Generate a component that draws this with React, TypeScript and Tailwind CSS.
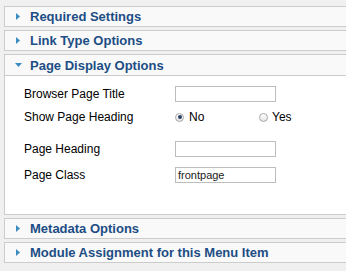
import React from 'react';

const Arrow = ({ open }: { open?: boolean }) => (
  <span className="w-[7px] h-[7px] flex items-center justify-center shrink-0">
    {open ? (
      <svg width="7" height="4" viewBox="0 0 7 4">
        <polygon points="0,0 7,0 3.5,4" fill="#3b8cc1" />
      </svg>
    ) : (
      <svg width="7" height="7" viewBox="0 0 7 7">
        <polygon points="1,0 5,3.5 1,7" fill="#3b8cc1" />
      </svg>
    )}
  </span>
);

const Header = ({ title, open, bordered = true }: { title: string; open?: boolean; bordered?: boolean }) => (
  <div
    className={`h-[21px] bg-[#f9f9f9] flex items-center pl-[10px] ${
      bordered ? 'border border-[#cccccc]' : 'border-b border-[#cccccc]'
    }`}
  >
    <Arrow open={open} />
    <span className="ml-[8px] text-[13px] font-bold text-[#1c4d84] leading-none">{title}</span>
  </div>
);

const TextInput = ({ value = '' }: { value?: string }) => (
  <div className="w-[101px] h-[16px] border border-[#bdbdbd] bg-white flex items-center pl-[2px] text-[11px] text-[#222] leading-none">
    {value}
  </div>
);

const Radio = ({ checked }: { checked?: boolean }) => (
  <span className="w-[9px] h-[9px] rounded-full border border-[#a8a8a8] bg-gradient-to-b from-[#ffffff] to-[#e4e4e4] flex items-center justify-center shrink-0">
    {checked && <span className="w-[4px] h-[4px] rounded-full bg-[#2a3f6a]" />}
  </span>
);

const Row = ({ label, children, className = '' }: { label: string; children: React.ReactNode; className?: string }) => (
  <div className={`flex items-center h-[16px] ${className}`}>
    <div className="w-[151px] shrink-0 text-[12px] text-black leading-none">{label}</div>
    {children}
  </div>
);

export default function App() {
  return (
    <div
      className="w-[346px] h-[271px] overflow-hidden bg-[#f0f0f0] pt-[6px] pl-[4px]"
      style={{ fontFamily: '"Liberation Sans", Arial, sans-serif' }}
    >
      <div className="w-[420px] flex flex-col gap-[3px]">
        <Header title="Required Settings" />
        <Header title="Link Type Options" />
        <div className="border border-[#cccccc] bg-white">
          <Header title="Page Display Options" open bordered={false} />
          <div className="h-[138px] pl-[19px] pt-[10px]">
            <Row label="Browser Page Title">
              <TextInput />
            </Row>
            <Row label="Show Page Heading" className="mt-[7px]">
              <div className="w-[84px] flex items-center">
                <Radio checked />
                <span className="ml-[5px] text-[12px] leading-none">No</span>
              </div>
              <div className="flex items-center">
                <Radio />
                <span className="ml-[4px] text-[12px] leading-none">Yes</span>
              </div>
            </Row>
            <Row label="Page Heading" className="mt-[16px]">
              <TextInput />
            </Row>
            <Row label="Page Class" className="mt-[10px]">
              <TextInput value="frontpage" />
            </Row>
          </div>
        </div>
        <Header title="Metadata Options" />
        <Header title="Module Assignment for this Menu Item" />
      </div>
    </div>
  );
}
